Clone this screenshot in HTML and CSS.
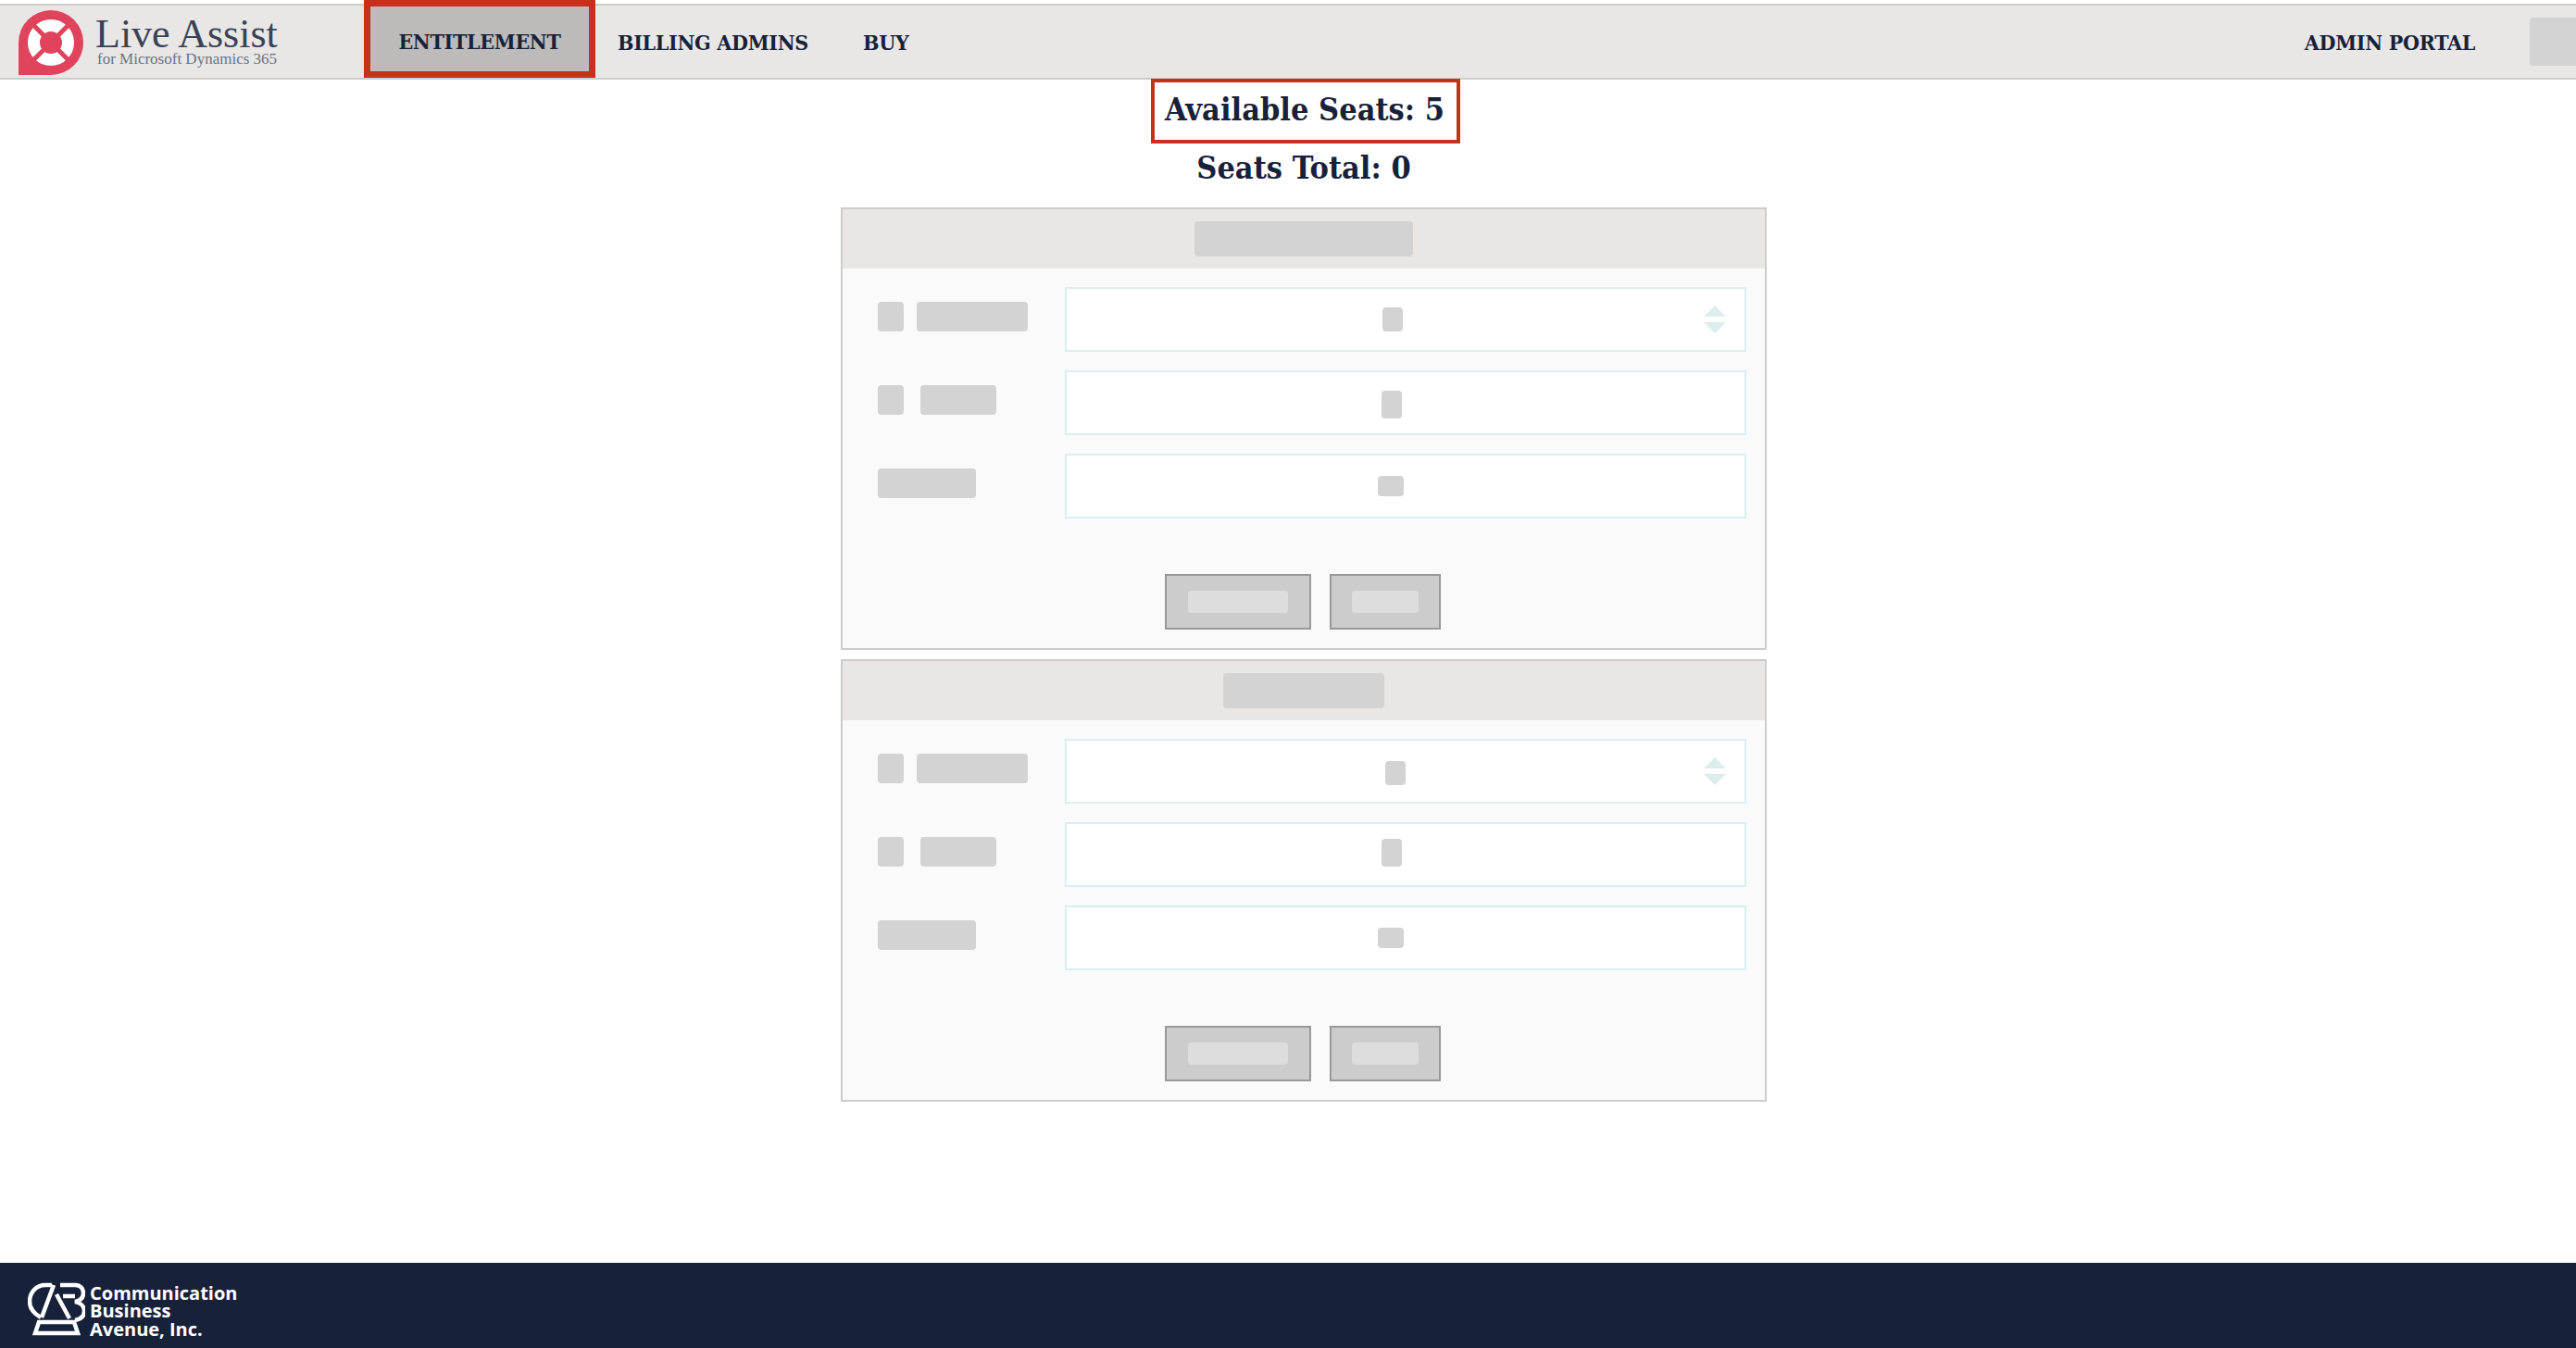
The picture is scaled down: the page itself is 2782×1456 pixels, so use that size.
FILE: index.html
```html
<!DOCTYPE html>
<html lang="en">
<head>
  <meta charset="UTF-8">
  <meta name="viewport" content="width=device-width, initial-scale=1.0">
  <title>Live Assist - Entitlement</title>
  <link rel="stylesheet" href="styles.css">
</head>
<body>
  <header class="topbar">
    <div class="brand">
      <svg class="brand-icon" viewBox="0 0 70 70">
        <path d="M35 0a35 35 0 1 1 0 70H0V35A35 35 0 0 1 35 0z" fill="#e0435c"/>
        <circle cx="35" cy="35" r="18.5" fill="none" stroke="#fff" stroke-width="13"/>
        <g stroke="#e0435c" stroke-width="5">
          <path d="M14 14l14 14M56 14L42 28M14 56l14-14M56 56L42 42"/>
        </g>
      </svg>
      <div class="brand-text">
        <div class="brand-name">Live Assist</div>
        <div class="brand-sub">for Microsoft Dynamics 365</div>
      </div>
    </div>
    <a class="tab">ENTITLEMENT</a>
    <a class="nav-link">BILLING ADMINS</a>
    <a class="nav-link">BUY</a>
    <a class="nav-link admin">ADMIN PORTAL</a>
    <div class="avatar"></div>
  </header>

  <main class="content">
    <div class="seats-box">Available Seats: 5</div>
    <div class="seats-total">Seats Total: 0</div>

    <section class="panel">
      <div class="panel-head"><span class="sk head-wide"></span></div>
      <div class="panel-body">
        <div class="row">
          <div class="label"><span class="sk square"></span><span class="sk w-120"></span></div>
          <div class="input">
            <span class="sk val val-a"></span>
            <svg class="spinner" viewBox="0 0 24 30"><path d="M12 0l12 12H0zM0 18h24L12 30z" fill="#dcedee"/></svg>
          </div>
        </div>
        <div class="row">
          <div class="label"><span class="sk square"></span><span class="sk w-82"></span></div>
          <div class="input"><span class="sk val val-b"></span></div>
        </div>
        <div class="row">
          <div class="label"><span class="sk w-106"></span></div>
          <div class="input"><span class="sk val val-c"></span></div>
        </div>
        <div class="actions">
          <div class="btn btn-long"><span class="btn-sk"></span></div>
          <div class="btn btn-short"><span class="btn-sk"></span></div>
        </div>
      </div>
    </section>

    <section class="panel">
      <div class="panel-head"><span class="sk head-narrow"></span></div>
      <div class="panel-body">
        <div class="row">
          <div class="label"><span class="sk square"></span><span class="sk w-120"></span></div>
          <div class="input">
            <span class="sk val val-d"></span>
            <svg class="spinner" viewBox="0 0 24 30"><path d="M12 0l12 12H0zM0 18h24L12 30z" fill="#dcedee"/></svg>
          </div>
        </div>
        <div class="row">
          <div class="label"><span class="sk square"></span><span class="sk w-82"></span></div>
          <div class="input"><span class="sk val val-e"></span></div>
        </div>
        <div class="row">
          <div class="label"><span class="sk w-106"></span></div>
          <div class="input"><span class="sk val val-c"></span></div>
        </div>
        <div class="actions">
          <div class="btn btn-long"><span class="btn-sk"></span></div>
          <div class="btn btn-short"><span class="btn-sk"></span></div>
        </div>
      </div>
    </section>
  </main>

  <footer class="footer">
    <svg class="footer-logo" viewBox="0 0 62 58" fill="none" stroke="#fff" stroke-width="4.5">
      <path d="M26 3H19C9 3 2 11 2 21c0 7 5 13 12 17"/>
      <path d="M28 3L15 38M31 13l14 26"/>
      <path d="M35 3h16c6 0 9 4 9 9 0 5-4 8-9 9 6 1 10 5 10 10 0 6-4 9-10 10"/>
      <path d="M38 15h13"/>
      <path d="M12 43h38l4 12H8z"/>
    </svg>
    <div class="footer-text">Communication<br>Business<br>Avenue, Inc.</div>
  </footer>
</body>
</html>
```

FILE: styles.css
```css
html, body {
  height: 100%;
}
body {
  margin: 0;
  display: flex;
  flex-direction: column;
  background: #fff;
  color: #17213a;
  font-family: "DejaVu Serif", "Liberation Serif", serif;
  font-stretch: condensed;
  overflow: hidden;
}

/* top bar */
.topbar {
  display: flex;
  align-items: center;
  height: 78px;
  margin-top: 4px;
  background: #e8e7e5;
  border-top: 2px solid #ccc;
  border-bottom: 2px solid #ccc;
  font-size: 23px;
  font-weight: 700;
  letter-spacing: -0.3px;
  white-space: nowrap;
}
.brand {
  display: flex;
  align-items: center;
  gap: 13px;
  width: 393px;
  box-sizing: border-box;
  padding-left: 20px;
  letter-spacing: 0;
}
.brand-icon {
  width: 70px;
  height: 70px;
  margin-top: 2px;
}
.brand-text {
  color: #3a4256;
  font-family: "Liberation Serif", serif;
  font-stretch: normal;
  font-weight: 400;
}
.brand-name {
  font-size: 44px;
  line-height: 38px;
}
.brand-sub {
  font-size: 17px;
  line-height: 16px;
  color: #6d7280;
  margin-left: 2px;
}
.tab {
  box-sizing: border-box;
  width: 250px;
  height: 84px;
  margin-top: -6px;
  padding-top: 4px;
  align-self: flex-start;
  display: flex;
  align-items: center;
  justify-content: center;
  background: #bdbbb9;
  border: 7px solid #c8301c;
}
.nav-link {
  margin-left: 24px;
}
.nav-link + .nav-link {
  margin-left: 59px;
}
.nav-link.admin {
  margin-left: auto;
}
.avatar {
  width: 50px;
  height: 52px;
  margin-left: 59px;
  background: #d3d3d3;
  border-radius: 4px 0 0 4px;
}

/* seats + panels */
.content {
  display: flex;
  flex-direction: column;
  align-items: center;
  padding-left: 34px;
}
.seats-box {
  box-sizing: border-box;
  width: 334px;
  height: 70px;
  margin: -1px 0 0 4px;
  padding-right: 2px;
  border: 4px solid #c8301c;
  font-size: 34px;
  font-weight: 700;
  line-height: 58px;
  text-align: center;
}
.seats-total {
  height: 50px;
  margin-bottom: 19px;
  font-size: 34px;
  font-weight: 700;
  line-height: 52px;
}
.panel {
  width: 1000px;
  box-sizing: border-box;
  margin-bottom: 10px;
  border: 2px solid #ccc;
  background: #fafafa;
}
.panel-head {
  display: flex;
  align-items: center;
  justify-content: center;
  height: 64px;
  background: #e8e7e5;
}
.panel-body {
  padding: 20px 20px 20px 38px;
}
.row {
  display: flex;
  margin-bottom: 20px;
}
.label {
  display: flex;
  width: 202px;
  gap: 14px;
  padding-top: 16px;
}
.label .w-82 {
  margin-left: 4px;
}
.input {
  box-sizing: border-box;
  display: flex;
  align-items: center;
  width: 736px;
  height: 70px;
  background: #fff;
  border: 2px solid #daeef3;
}
.spinner {
  width: 24px;
  height: 30px;
  margin-left: auto;
  margin-right: 20px;
}

/* grey placeholder blocks */
.sk {
  display: block;
  background: #d3d3d3;
  border-radius: 4px;
}
.head-wide { width: 236px; height: 38px; }
.head-narrow { width: 174px; height: 38px; }
.square { width: 28px; height: 32px; }
.w-120 { width: 120px; height: 32px; }
.w-82 { width: 82px; height: 32px; }
.w-106 { width: 106px; height: 32px; }
.val { position: relative; }
.val-a { width: 22px; height: 26px; margin-left: 341px; }
.val-b { width: 22px; height: 30px; margin-left: 340px; top: 2px; }
.val-c { width: 28px; height: 22px; margin-left: 336px; }
.val-d { width: 22px; height: 26px; margin-left: 344px; top: 2px; }
.val-e { width: 22px; height: 30px; margin-left: 340px; top: -2px; }

.actions {
  display: flex;
  gap: 20px;
  margin: 60px 0 0 310px;
}
.btn {
  box-sizing: border-box;
  display: flex;
  align-items: center;
  justify-content: center;
  height: 60px;
  background: #ccc;
  border: 2px solid #999;
}
.btn-long { width: 158px; }
.btn-short { width: 120px; }
.btn-sk {
  height: 24px;
  background: #ddd;
  border-radius: 4px;
}
.btn-long .btn-sk { width: 108px; }
.btn-short .btn-sk { width: 72px; }

/* footer */
.footer {
  margin-top: auto;
  display: flex;
  align-items: center;
  gap: 5px;
  height: 92px;
  padding-left: 30px;
  background: #17213a;
  color: #fff;
}
.footer-logo {
  width: 62px;
  height: 58px;
  margin-top: 7px;
}
.footer-text {
  margin-top: 12px;
  font-family: "Open Sans", "Noto Sans", sans-serif;
  font-stretch: normal;
  font-size: 20px;
  font-weight: 700;
  line-height: 19.5px;
}
```
